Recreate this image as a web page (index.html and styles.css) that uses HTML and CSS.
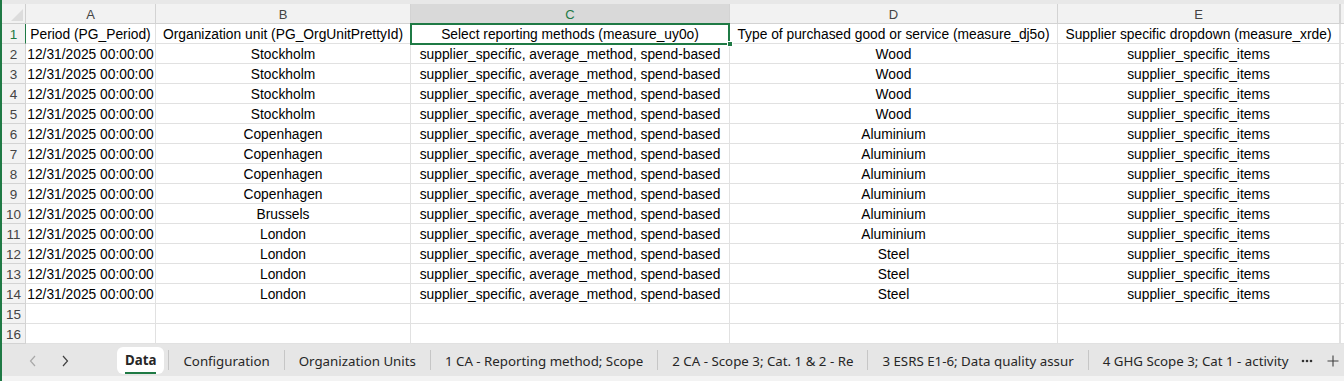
FILE: index.html
```html
<!DOCTYPE html>
<html lang="en">
<head>
<meta charset="UTF-8">
<title>Data - Workbook</title>
<link rel="stylesheet" href="styles.css">
</head>
<body>
<div class="app">

  <!-- Sheet grid -->
  <div class="top-strip"></div>
  <div class="grid">
    <div class="corner"></div>
    <div class="col-head">A</div>
    <div class="col-head">B</div>
    <div class="col-head active">C</div>
    <div class="col-head">D</div>
    <div class="col-head">E</div>
    <div class="col-head tail"></div>

    <div class="row-head active">1</div>
    <div class="cell">Period (PG_Period)</div>
    <div class="cell">Organization unit (PG_OrgUnitPrettyId)</div>
    <div class="cell sel">Select reporting methods (measure_uy0o)</div>
    <div class="cell">Type of purchased good or service (measure_dj5o)</div>
    <div class="cell">Supplier specific dropdown (measure_xrde)</div>
    <div class="cell tail"></div>

    <div class="row-head">2</div>
    <div class="cell">12/31/2025 00:00:00</div>
    <div class="cell">Stockholm</div>
    <div class="cell">supplier_specific, average_method, spend-based</div>
    <div class="cell">Wood</div>
    <div class="cell">supplier_specific_items</div>
    <div class="cell tail"></div>

    <div class="row-head">3</div>
    <div class="cell">12/31/2025 00:00:00</div>
    <div class="cell">Stockholm</div>
    <div class="cell">supplier_specific, average_method, spend-based</div>
    <div class="cell">Wood</div>
    <div class="cell">supplier_specific_items</div>
    <div class="cell tail"></div>

    <div class="row-head">4</div>
    <div class="cell">12/31/2025 00:00:00</div>
    <div class="cell">Stockholm</div>
    <div class="cell">supplier_specific, average_method, spend-based</div>
    <div class="cell">Wood</div>
    <div class="cell">supplier_specific_items</div>
    <div class="cell tail"></div>

    <div class="row-head">5</div>
    <div class="cell">12/31/2025 00:00:00</div>
    <div class="cell">Stockholm</div>
    <div class="cell">supplier_specific, average_method, spend-based</div>
    <div class="cell">Wood</div>
    <div class="cell">supplier_specific_items</div>
    <div class="cell tail"></div>

    <div class="row-head">6</div>
    <div class="cell">12/31/2025 00:00:00</div>
    <div class="cell">Copenhagen</div>
    <div class="cell">supplier_specific, average_method, spend-based</div>
    <div class="cell">Aluminium</div>
    <div class="cell">supplier_specific_items</div>
    <div class="cell tail"></div>

    <div class="row-head">7</div>
    <div class="cell">12/31/2025 00:00:00</div>
    <div class="cell">Copenhagen</div>
    <div class="cell">supplier_specific, average_method, spend-based</div>
    <div class="cell">Aluminium</div>
    <div class="cell">supplier_specific_items</div>
    <div class="cell tail"></div>

    <div class="row-head">8</div>
    <div class="cell">12/31/2025 00:00:00</div>
    <div class="cell">Copenhagen</div>
    <div class="cell">supplier_specific, average_method, spend-based</div>
    <div class="cell">Aluminium</div>
    <div class="cell">supplier_specific_items</div>
    <div class="cell tail"></div>

    <div class="row-head">9</div>
    <div class="cell">12/31/2025 00:00:00</div>
    <div class="cell">Copenhagen</div>
    <div class="cell">supplier_specific, average_method, spend-based</div>
    <div class="cell">Aluminium</div>
    <div class="cell">supplier_specific_items</div>
    <div class="cell tail"></div>

    <div class="row-head">10</div>
    <div class="cell">12/31/2025 00:00:00</div>
    <div class="cell">Brussels</div>
    <div class="cell">supplier_specific, average_method, spend-based</div>
    <div class="cell">Aluminium</div>
    <div class="cell">supplier_specific_items</div>
    <div class="cell tail"></div>

    <div class="row-head">11</div>
    <div class="cell">12/31/2025 00:00:00</div>
    <div class="cell">London</div>
    <div class="cell">supplier_specific, average_method, spend-based</div>
    <div class="cell">Aluminium</div>
    <div class="cell">supplier_specific_items</div>
    <div class="cell tail"></div>

    <div class="row-head">12</div>
    <div class="cell">12/31/2025 00:00:00</div>
    <div class="cell">London</div>
    <div class="cell">supplier_specific, average_method, spend-based</div>
    <div class="cell">Steel</div>
    <div class="cell">supplier_specific_items</div>
    <div class="cell tail"></div>

    <div class="row-head">13</div>
    <div class="cell">12/31/2025 00:00:00</div>
    <div class="cell">London</div>
    <div class="cell">supplier_specific, average_method, spend-based</div>
    <div class="cell">Steel</div>
    <div class="cell">supplier_specific_items</div>
    <div class="cell tail"></div>

    <div class="row-head">14</div>
    <div class="cell">12/31/2025 00:00:00</div>
    <div class="cell">London</div>
    <div class="cell">supplier_specific, average_method, spend-based</div>
    <div class="cell">Steel</div>
    <div class="cell">supplier_specific_items</div>
    <div class="cell tail"></div>

    <div class="row-head">15</div>
    <div class="cell"></div>
    <div class="cell"></div>
    <div class="cell"></div>
    <div class="cell"></div>
    <div class="cell"></div>
    <div class="cell tail"></div>

    <div class="row-head">16</div>
    <div class="cell"></div>
    <div class="cell"></div>
    <div class="cell"></div>
    <div class="cell"></div>
    <div class="cell"></div>
    <div class="cell tail"></div>
  </div>

  <!-- Sheet tabs -->
  <div class="tabbar">
    <div class="tab-nav">
      <svg class="nav-arrow prev" width="8" height="12" viewBox="0 0 8 12"><path d="M6 1 L1.5 6 L6 11" fill="none" stroke="currentColor" stroke-width="1.2"/></svg>
      <svg class="nav-arrow next" width="8" height="12" viewBox="0 0 8 12"><path d="M2 1 L6.5 6 L2 11" fill="none" stroke="currentColor" stroke-width="1.2"/></svg>
    </div>
    <div class="tab-list">
      <div class="tab current"><span>Data</span></div>
      <div class="tab-sep"></div>
      <div class="tab">Configuration</div>
      <div class="tab-sep"></div>
      <div class="tab">Organization Units</div>
      <div class="tab-sep"></div>
      <div class="tab">1 CA - Reporting method; Scope</div>
      <div class="tab-sep"></div>
      <div class="tab">2 CA - Scope 3; Cat. 1 &amp; 2 - Re</div>
      <div class="tab-sep"></div>
      <div class="tab">3 ESRS E1-6; Data quality assur</div>
      <div class="tab-sep"></div>
      <div class="tab">4 GHG Scope 3; Cat 1 - activity</div>
    </div>
    <div class="tab-more">
      <svg width="12" height="4" viewBox="0 0 12 4"><circle cx="2" cy="2" r="1.3" fill="currentColor"/><circle cx="6" cy="2" r="1.3" fill="currentColor"/><circle cx="10" cy="2" r="1.3" fill="currentColor"/></svg>
    </div>
    <div class="tab-add">
      <svg width="12" height="12" viewBox="0 0 12 12"><path d="M6 0.5 V11.5 M0.5 6 H11.5" stroke="currentColor" stroke-width="1.1"/></svg>
    </div>
  </div>
  <div class="bottom-strip"></div>

</div>
</body>
</html>
```

FILE: styles.css
```css
body {
  margin: 0;
  background-color: #ffffff;
  font-family: "Liberation Sans", Arial, sans-serif;
  overflow: hidden;
}

.app {
  width: 1344px;
  height: 381px;
  box-sizing: border-box;
  border-left: 2px solid #1f7a45;
  display: flex;
  flex-direction: column;
}

/* Sheet grid */
.top-strip {
  height: 4px;
  background-color: #e8e8e8;
}

.grid {
  display: grid;
  grid-template-columns: 24px 130px 255px 319px 328px 282px 1fr;
  grid-auto-rows: 20px;
  height: 340px;
}

.grid > div {
  box-sizing: border-box;
  border-right: 1px solid #e1e1e1;
  border-bottom: 1px solid #e1e1e1;
  white-space: nowrap;
  overflow: hidden;
  text-align: center;
  line-height: 21px;
}

.corner {
  position: relative;
  background-color: #f2f2f2;
  border-color: #cfcfcf !important;
}

.corner::after {
  content: "";
  position: absolute;
  right: 2px;
  bottom: 2px;
  border-style: solid;
  border-width: 0 0 12px 12px;
  border-color: transparent transparent #dcdcdc transparent;
}

.col-head {
  background-color: #f2f2f2;
  border-color: #d3d3d3 !important;
  color: #444444;
  font-size: 13px;
}

.col-head.active {
  background-color: #d9d9d9;
  color: #1f7a45;
  border-bottom: 1px solid #1f7a45 !important;
}

.row-head {
  background-color: #f2f2f2;
  border-color: #d3d3d3 !important;
  color: #444444;
  font-size: 13.5px;
}

.row-head.active {
  color: #1f7a45;
  border-right: 1px solid #1f7a45 !important;
}

.cell {
  font-size: 13.8px;
  color: #000000;
}

.cell.tail,
.col-head.tail {
  border-right: none !important;
}

.col-head.tail {
  border-left: 1px solid #d3d3d3;
}

.cell.tail {
  border-left: 1px solid #e1e1e1;
}

/* Selected cell */
.cell.sel {
  position: relative;
  overflow: visible;
}

.cell.sel::after {
  content: "";
  position: absolute;
  left: -1px;
  top: -1px;
  right: -1px;
  bottom: -2px;
  border: 2px solid #1f7a45;
}

.cell.sel::before {
  content: "";
  position: absolute;
  right: -4px;
  bottom: -4px;
  width: 6px;
  height: 6px;
  background-color: #1f7a45;
  border: 1px solid #ffffff;
  box-sizing: border-box;
  z-index: 2;
}

/* Sheet tabs */
.tabbar {
  height: 32px;
  background-color: #e6e6e6;
  display: flex;
  align-items: center;
  font-family: "Noto Sans", "Open Sans", sans-serif;
  font-size: 13.3px;
  color: #262626;
}

.tab-nav {
  width: 115px;
  flex-shrink: 0;
  display: flex;
  align-items: center;
  gap: 24px;
  padding-left: 27px;
  padding-top: 2px;
  box-sizing: border-box;
}

.nav-arrow.prev {
  color: #a8a8a8;
}

.nav-arrow.next {
  color: #404040;
}

.tab-list {
  flex: 1;
  min-width: 0;
  overflow: hidden;
  display: flex;
  align-items: center;
  white-space: nowrap;
  height: 100%;
}

.tab {
  padding: 2px 14px 0;
  flex-shrink: 0;
  line-height: 26px;
}

.tab.current {
  background-color: #ffffff;
  border-radius: 6px;
  padding: 0 8px;
  font-weight: bold;
  height: 27px;
  margin-top: 1px;
  margin-right: 4px;
}

.tab.current span {
  display: inline-block;
  line-height: 24px;
  border-bottom: 2px solid #1f7a45;
}

.tab-sep {
  width: 1px;
  height: 20px;
  background-color: #c6c6c6;
  flex-shrink: 0;
}

.tab-more {
  width: 30px;
  flex-shrink: 0;
  display: flex;
  justify-content: center;
  padding-top: 2px;
  color: #333333;
}

.tab-add {
  width: 22px;
  flex-shrink: 0;
  display: flex;
  justify-content: center;
  padding-top: 2px;
  color: #404040;
}

.bottom-strip {
  height: 5px;
  background-color: #f3f3f3;
}
```
